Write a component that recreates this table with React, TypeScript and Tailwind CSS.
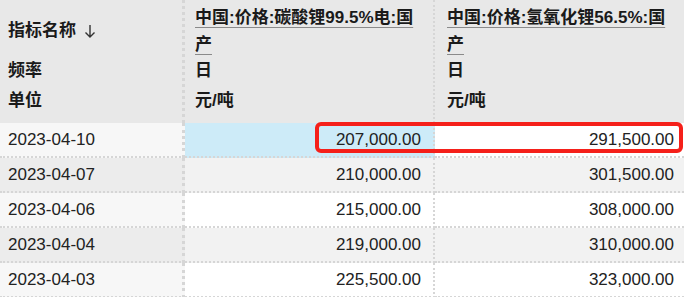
import React from "react";

const rows = [
  { date: "2023-04-10", a: "207,000.00", b: "291,500.00" },
  { date: "2023-04-07", a: "210,000.00", b: "301,500.00" },
  { date: "2023-04-06", a: "215,000.00", b: "308,000.00" },
  { date: "2023-04-04", a: "219,000.00", b: "310,000.00" },
  { date: "2023-04-03", a: "225,500.00", b: "323,000.00" },
];

const cols = [
  ["中国:价格:碳酸锂99.5%电:国", "产"],
  ["中国:价格:氢氧化锂56.5%:国", "产"],
];

const font = {
  fontFamily: '"Liberation Sans", "Noto Sans CJK SC", sans-serif',
};

export default function App() {
  return (
    <div
      className="relative w-[684px] h-[297px] overflow-hidden bg-white text-[17px] text-[#222]"
      style={font}
    >
      {/* header */}
      <div className="grid grid-cols-[185px_250px_1fr] h-[123px] bg-[#e8e8e8]">
        <div className="flex flex-col pt-[4px] pl-[8px] font-bold text-[#1a1a1a] border-r-[3px] border-dotted border-[#d6d6d6]">
          <div className="h-[54px] flex items-center gap-[8px]">
            <span>指标名称</span>
            <svg width="12" height="14" viewBox="0 0 12 14" fill="none" stroke="#333" strokeWidth="1.4">
              <path d="M6 1v12M1.5 8.5L6 13l4.5-4.5" />
            </svg>
          </div>
          <div className="leading-[26px]">频率</div>
          <div className="leading-[26px] mt-[4px]">单位</div>
        </div>
        {cols.map((c, i) => (
          <div
            key={i}
            className={`flex flex-col pt-[4px] font-bold text-[#1a1a1a] ${
              i === 0
                ? "pl-[10px] border-r-2 border-dotted border-[#d6d6d6]"
                : "pl-[12px]"
            }`}
          >
            <div className="h-[54px] leading-[27px] whitespace-nowrap">
              <span className="underline decoration-[#8a8a8a] underline-offset-[4px] decoration-1">
                {c[0]}
              </span>
              <br />
              <span className="underline decoration-[#8a8a8a] underline-offset-[4px] decoration-1">
                {c[1]}
              </span>
            </div>
            <div className="leading-[26px]">日</div>
            <div className="leading-[26px] mt-[4px]">元/吨</div>
          </div>
        ))}
      </div>

      {/* body */}
      {rows.map((r, i) => {
        const odd = i % 2 === 1;
        return (
          <div key={r.date} className="grid grid-cols-[185px_250px_1fr] h-[35px]">
            <div
              className={`flex items-center pl-[8px] border-r-[3px] border-b-2 border-dotted border-[#d6d6d6] ${
                odd ? "bg-[#ececec]" : "bg-[#f7f7f7]"
              }`}
            >
              {r.date}
            </div>
            <div
              className={`flex items-center justify-end pr-[12px] border-r-2 border-b-2 border-dotted border-[#d6d6d6] ${
                i === 0 ? "bg-[#cdebf8]" : odd ? "bg-[#f2f2f2]" : "bg-white"
              }`}
            >
              {r.a}
            </div>
            <div
              className={`flex items-center justify-end pr-[10px] border-b-2 border-dotted border-[#d6d6d6] ${
                odd ? "bg-[#f2f2f2]" : "bg-white"
              }`}
            >
              {r.b}
            </div>
          </div>
        );
      })}

      {/* highlight box */}
      <div className="absolute left-[315px] top-[122px] w-[368px] h-[31px] border-4 border-[#f5201a] rounded-[6px]" />
    </div>
  );
}
